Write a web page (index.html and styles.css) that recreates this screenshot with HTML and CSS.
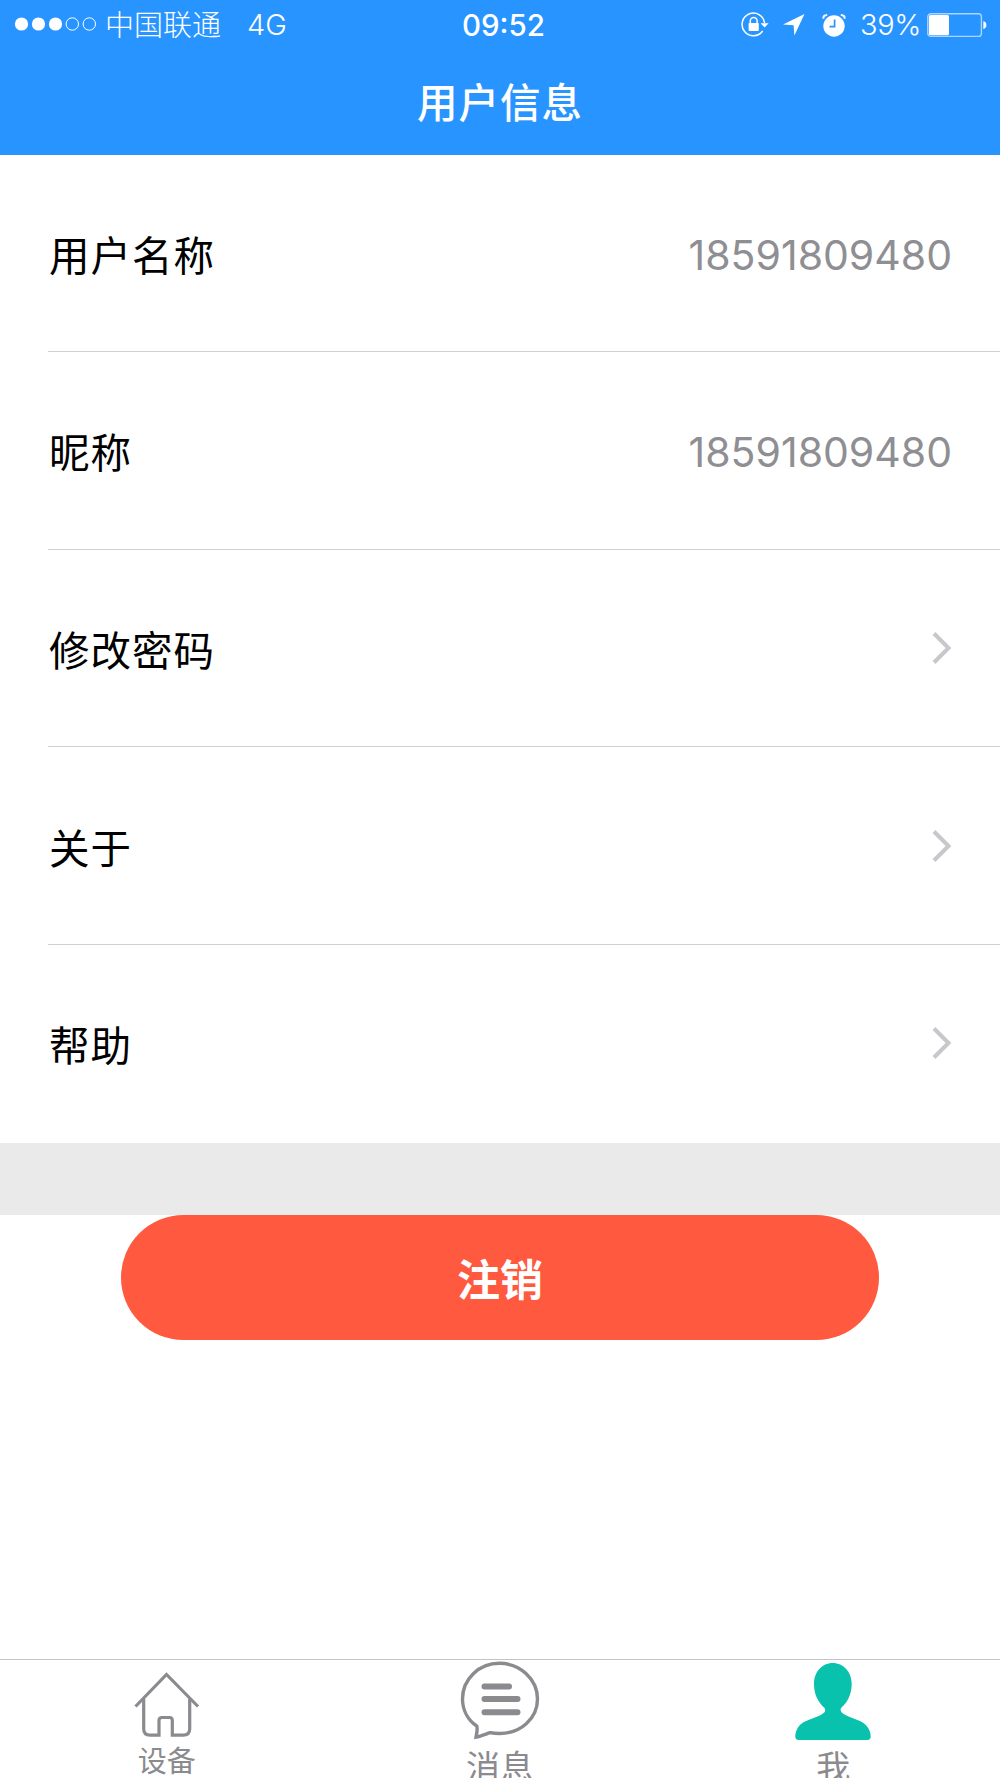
FILE: index.html
```html
<!DOCTYPE html>
<html lang="zh-CN">
<head>
    <meta charset="UTF-8">
    <meta name="viewport" content="width=device-width, initial-scale=1.0">
    <title>用户信息</title>
    <link rel="stylesheet" href="styles.css">
</head>
<body>
    <header class="header">
        <div class="status-bar">
            <div class="status-left">
                <svg class="signal" width="84" height="16" viewBox="0 0 84 16">
                    <g fill="#fff">
                        <circle cx="7.5" cy="8" r="6.6"/>
                        <circle cx="24.5" cy="8" r="6.6"/>
                        <circle cx="41.5" cy="8" r="6.6"/>
                    </g>
                    <g fill="none" stroke="#fff" stroke-width="1">
                        <circle cx="58.3" cy="8" r="6.2"/>
                        <circle cx="75.3" cy="8" r="6.2"/>
                    </g>
                </svg>
                <span class="carrier">中国联通</span>
                <span class="network">4G</span>
            </div>
            <div class="time">09:52</div>
            <div class="status-right">
                <svg class="icon-lock" width="28" height="26" viewBox="0 0 28 26">
                    <path d="M23.6 11A11.3 11.3 0 1 0 21.6 19" fill="none" stroke="#fff" stroke-width="1.5"/>
                    <path d="M19.6 11.2H27.6L23.6 15.6Z" fill="#fff"/>
                    <rect x="7.6" y="11" width="10.2" height="8" rx=".8" fill="#fff"/>
                    <path d="M9.3 11.5V9a3.4 3.4 0 0 1 6.8 0v2.5" fill="none" stroke="#fff" stroke-width="1.5"/>
                </svg>
                <svg class="icon-arrow" width="22" height="24" viewBox="0 0 22 24">
                    <path d="M21.5 1L11.4 22.6L10.6 12.2L0 11.6Z" fill="#fff"/>
                </svg>
                <svg class="icon-alarm" width="24" height="24" viewBox="0 0 24 24">
                    <circle cx="12" cy="13" r="10.7" fill="#fff"/>
                    <path d="M1.5 5.8Q.8 2.2 5.2 2M18.8 2Q23.2 2.2 22.5 5.8" fill="none" stroke="#fff" stroke-width="2"/>
                    <path d="M12.6 6.5V13.6H7.5" fill="none" stroke="#2894ff" stroke-width="1.7"/>
                </svg>
                <span class="percent">39%</span>
                <svg class="battery" width="60" height="25" viewBox="0 0 60 25">
                    <rect x=".8" y=".8" width="53.6" height="22.6" rx="3" fill="none" stroke="#a9d5ff" stroke-width="1.4"/>
                    <rect x="2" y="2" width="20" height="20.2" rx="1.5" fill="#fff"/>
                    <path d="M56.3 8.2a4 4 0 0 1 0 7.8Z" fill="#fff"/>
                </svg>
            </div>
        </div>
        <h1 class="title">用户信息</h1>
    </header>

    <ul class="list">
        <li class="item">
            <span class="label">用户名称</span>
            <span class="value">18591809480</span>
        </li>
        <li class="item">
            <span class="label">昵称</span>
            <span class="value">18591809480</span>
        </li>
        <li class="item">
            <span class="label">修改密码</span>
            <svg class="chevron" width="20" height="32" viewBox="0 0 20 32"><path d="M2 1.5L16.5 16L2 30.5"/></svg>
        </li>
        <li class="item">
            <span class="label">关于</span>
            <svg class="chevron" width="20" height="32" viewBox="0 0 20 32"><path d="M2 1.5L16.5 16L2 30.5"/></svg>
        </li>
        <li class="item">
            <span class="label">帮助</span>
            <svg class="chevron" width="20" height="32" viewBox="0 0 20 32"><path d="M2 1.5L16.5 16L2 30.5"/></svg>
        </li>
    </ul>

    <div class="spacer"></div>
    <button class="btn" type="button">注销</button>

    <nav class="tabs">
        <a class="tab tab-device">
            <svg width="66" height="68" viewBox="0 0 66 68" fill="none" stroke="#8a8a8f" stroke-width="3.2">
                <path d="M1.5 34.5L32.5 2.5L64 34.5"/>
                <path d="M9.7 27V57Q9.7 63.2 16 63.2H25V48.5Q25 45.5 28 45.5H35.5Q38.3 45.5 38.3 48.5V63.2H49Q55.7 63.2 55.7 57V27"/>
            </svg>
            <span>设备</span>
        </a>
        <a class="tab tab-message">
            <svg width="80" height="80" viewBox="0 0 80 80" fill="none" stroke="#8a8a8f">
                <path stroke-width="3.4" d="M16.7 65C8 59 2.5 49 2.5 38C2.5 18 19 2.3 39.5 2.3S77.5 18 77.5 38C77.5 58 60 72.5 40 72.5C36.5 72.5 33 72.3 30 71.7C26 73 21 75.2 16 76.2C16.6 72 18 68 16.7 65Z"/>
                <path stroke-width="6" stroke-linecap="round" d="M24.5 25.5H49M24.5 38H57.5M24.5 51.3H57.5"/>
            </svg>
            <span>消息</span>
        </a>
        <a class="tab tab-me">
            <svg width="76" height="78" viewBox="0 0 76 78" fill="#08c2ae">
                <path d="M37.7 0C48.5 0 56.7 9 56.7 21C56.7 32 51.5 40.5 46.5 44.5C45.3 45.5 45.3 48 46.5 49.2C52 54 60 55.5 66 58.5C72.5 62 75.7 68 75.7 73.5Q75.7 77 72 77H4Q.3 77 .3 73.5C.3 68 3.5 61.5 10 58.5C16 55.5 24 54 29.3 49.5C30.5 48.3 30.5 46 29.3 44.7C23.5 39.5 19 32 19 21C19 9 27 0 37.7 0Z"/>
            </svg>
            <span>我</span>
        </a>
    </nav>
</body>
</html>
```
FILE: styles.css
```css
* {
    box-sizing: border-box;
}
body {
    font-family: Inter, "Noto Sans CJK SC", sans-serif;
    background-color: #fff;
    display: flex;
    flex-direction: column;
    height: 1778px;
    margin: 0;
    overflow: hidden;
}
.header {
    height: 154.5px;
    background-color: #2894ff;
    color: #fff;
    flex-shrink: 0;
}
.status-bar {
    display: grid;
    grid-template-columns: 1fr auto 1fr;
    align-items: center;
    height: 50px;
    padding: 0 13px 0 14px;
    font-size: 29px;
    line-height: 48px;
}
.status-left,
.status-right {
    display: flex;
    align-items: center;
}
.status-right {
    justify-content: flex-end;
}
.signal {
    margin-top: -3px;
}
.carrier {
    margin-left: 7px;
    padding-top: 2px;
    font-size: 29px;
    font-weight: 300;
}
.network {
    margin-left: 26px;
    font-weight: 300;
}
.time {
    font-size: 29.5px;
    font-weight: 500;
    padding-left: 6px;
}
.icon-lock {
    margin-right: 14px;
}
.icon-arrow {
    margin-right: 17px;
}
.icon-alarm {
    margin-right: 14px;
}
.percent {
    font-weight: 300;
    letter-spacing: -0.4px;
    margin-right: 6px;
}
.title {
    margin: 0;
    padding-top: 24px;
    font-size: 40.5px;
    font-weight: 500;
    line-height: 60px;
    letter-spacing: 1px;
    text-align: center;
}
.list {
    list-style: none;
    margin: 0;
    padding: 0 0 0 48px;
    flex-shrink: 0;
}
.item {
    display: flex;
    align-items: center;
    justify-content: space-between;
    height: 197.6px;
    padding-right: 48px;
    border-bottom: 1px solid #d0d0d3;
}
.item:last-child {
    height: 198.5px;
    padding-bottom: 2px;
    border-bottom: none;
}
.label {
    padding-top: 1px;
    padding-left: 1px;
    font-size: 40.5px;
    letter-spacing: 1px;
    color: #000;
}
.value {
    padding-top: 4px;
    font-size: 41px;
    color: #8e8e93;
}
.chevron {
    fill: none;
    stroke: #c7c7cc;
    stroke-width: 4;
}
.spacer {
    height: 72px;
    background-color: #eaeaea;
    flex-shrink: 0;
}
.btn {
    width: 758px;
    height: 125px;
    margin: 0 auto;
    padding: 0 0 2px;
    border: none;
    border-radius: 63px;
    background-color: #ff5a3f;
    color: #fff;
    font-family: inherit;
    font-size: 43px;
    font-weight: 700;
    flex-shrink: 0;
}
.tabs {
    display: flex;
    height: 119px;
    margin-top: auto;
    border-top: 1px solid #c4c4c6;
    overflow: hidden;
    flex-shrink: 0;
}
.tab {
    display: flex;
    flex: 1;
    flex-direction: column;
    align-items: center;
    color: #8a8a8f;
    font-size: 34px;
    line-height: 54px;
}
.tab svg {
    flex-shrink: 0;
}
.tab-device {
    padding-top: 12px;
    font-size: 29px;
    line-height: 44px;
}
.tab-message {
    padding-top: 1px;
}
.tab-me {
    padding-top: 3px;
}
```
